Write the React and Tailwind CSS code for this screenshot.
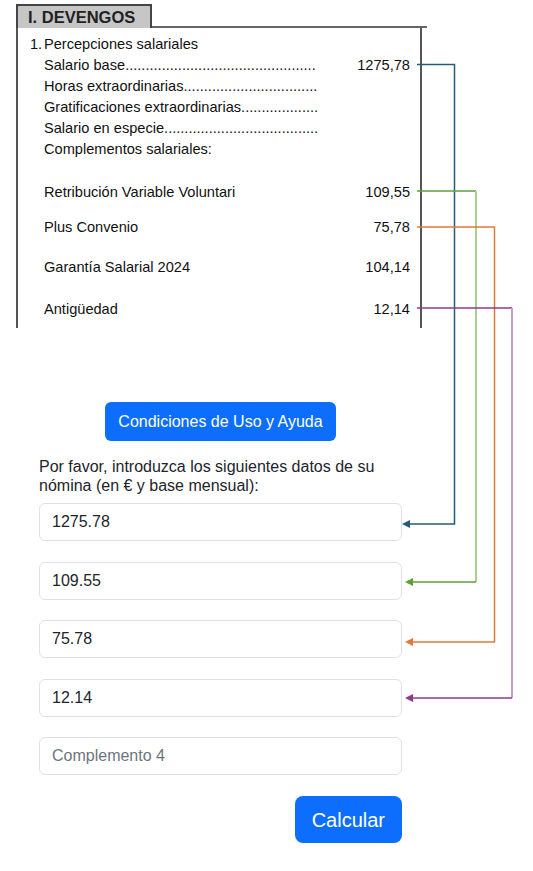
import React from "react";

const items = [
  { label: "Salario base", dots: 47, value: "1275,78" },
  { label: "Horas extraordinarias", dots: 33 },
  { label: "Gratificaciones extraordinarias", dots: 19 },
  { label: "Salario en especie", dots: 38 },
  { label: "Complementos salariales:", dots: 0 },
];

const complementos = [
  { label: "Retribución Variable Voluntari", value: "109,55", mt: "mt-[22px]" },
  { label: "Plus Convenio", value: "75,78", mt: "mt-[14px]" },
  { label: "Garantía Salarial 2024", value: "104,14", mt: "mt-[19px]" },
  { label: "Antigüedad", value: "12,14", mt: "mt-[21px]" },
];

const Connectors = () => (
  <svg
    className="absolute left-0 top-0 pointer-events-none"
    width="533"
    height="871"
    viewBox="0 0 533 871"
    fill="none"
  >
    {/* azul - salario base */}
    <path d="M417 64.5H454.5V524H409" stroke="#245c7c" strokeWidth="1.5" />
    <polygon points="402,524 410,520 410,528" fill="#245c7c" />
    {/* verde */}
    <path d="M417 191H476" stroke="#5e9f3c" strokeWidth="1.5" />
    <path d="M476 191V582" stroke="#a9d18e" strokeWidth="2" />
    <path d="M476 582H412" stroke="#5e9f3c" strokeWidth="1.5" />
    <polygon points="405,582 413,578 413,586" fill="#5e9f3c" />
    {/* naranja */}
    <path d="M417 227H494.5V642H412" stroke="#e07a3c" strokeWidth="1.5" />
    <polygon points="405,642 413,638 413,646" fill="#e07a3c" />
    {/* morado */}
    <path d="M417 308H512" stroke="#8e3a8e" strokeWidth="1.5" />
    <path d="M512 308V698" stroke="#c79bcb" strokeWidth="2" />
    <path d="M512 698H412" stroke="#8e3a8e" strokeWidth="1.5" />
    <polygon points="405,698 413,694 413,702" fill="#8e3a8e" />
  </svg>
);

const App = () => {
  return (
    <div
      className="relative w-[533px] min-h-[871px] bg-white text-[#111]"
      style={{ fontFamily: '"Liberation Sans", Arial, sans-serif' }}
    >
      {/* Recorte de la nómina */}
      <div className="ml-4 pt-[4px] w-[406px]">
        <div className="flex items-end">
          <div className="w-[136px] h-[24px] bg-[#c6c6c6] border-2 border-b-0 border-[#444] pl-[10px] text-[16.5px] font-bold leading-[22px] text-[#222]">
            I. DEVENGOS
          </div>
          <div className="flex-1 border-b-2 border-[#666] mr-[-5px]" />
        </div>
        <div className="border-l-2 border-r-2 border-[#555] h-[300px] pt-[6px] pr-[10px] text-[14.6px]">
          <div className="flex h-[21px] items-center pl-[12px]">
            <span className="w-[14px]">1.</span>
            <span>Percepciones salariales</span>
          </div>
          {items.map((it) => (
            <div key={it.label} className="flex h-[21px] items-center pl-[26px]">
              <span className="whitespace-nowrap">
                {it.label}
                {".".repeat(it.dots)}
              </span>
              <span className="flex-1 text-right">{it.value}</span>
            </div>
          ))}
          {complementos.map((it) => (
            <div
              key={it.label}
              className={`${it.mt} flex h-[21px] items-center pl-[26px]`}
            >
              <span className="flex-1">{it.label}</span>
              <span className="text-right">{it.value}</span>
            </div>
          ))}
        </div>
      </div>

      {/* Formulario */}
      <div className="ml-[39px] w-[363px] pt-[74px] text-[#212529]">
        <div className="flex justify-center">
          <button className="h-[39px] px-[13px] rounded-md bg-[#0d6efd] text-white text-[16px]">
            Condiciones de Uso y Ayuda
          </button>
        </div>
        <p className="mt-[16px] text-[16px] leading-[19px]">
          Por favor, introduzca los siguientes datos de su nómina (en € y base
          mensual):
        </p>
        <div className="mt-[8px] flex flex-col gap-[20.5px]">
          {["1275.78", "109.55", "75.78", "12.14"].map((v) => (
            <input
              key={v}
              defaultValue={v}
              className="h-[38px] w-full rounded-md border border-[#dee2e6] px-3 text-[16px] text-[#212529] outline-none"
            />
          ))}
          <input
            placeholder="Complemento 4"
            className="h-[38px] w-full rounded-md border border-[#dee2e6] px-3 text-[16px] text-[#212529] placeholder:text-[#6c757d] outline-none"
          />
        </div>
        <div className="mt-[21px] flex justify-end">
          <button className="h-[47px] px-[17px] rounded-lg bg-[#0d6efd] text-white text-[20px]">
            Calcular
          </button>
        </div>
      </div>

      <Connectors />
    </div>
  );
};

export default App;
